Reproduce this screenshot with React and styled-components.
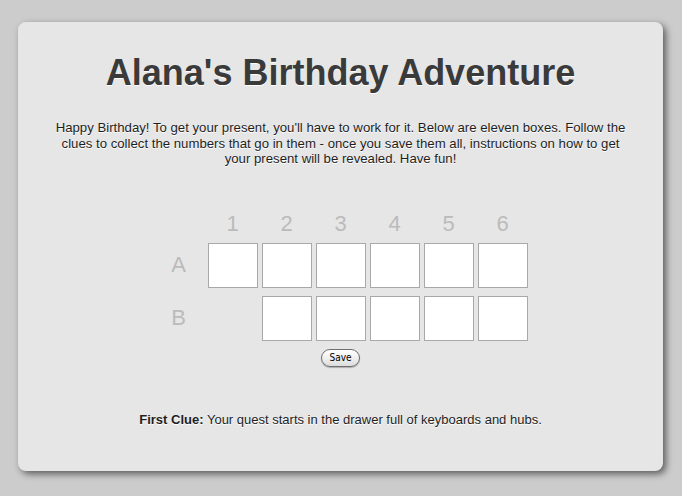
import React from "react"
import styled, { createGlobalStyle } from "styled-components"

const GlobalStyle = createGlobalStyle`
    html, body {
        margin: 0;
        padding: 0;
        background: #cccccc;
    }
    body {
        font-family: "Liberation Sans", Arial, sans-serif;
    }
`

const Page = styled.div`
    padding: 22px 0 0 18px;
    height: 496px;
    box-sizing: border-box;
`

const Card = styled.div`
    width: 645px;
    height: 449px;
    box-sizing: border-box;
    background: #e6e6e6;
    border-radius: 8px;
    box-shadow: 3px 3px 7px rgba(0, 0, 0, 0.55);
    display: flex;
    flex-direction: column;
    align-items: center;
    padding-top: 30px;
`

const Title = styled.h1`
    margin: 0;
    font-size: 36px;
    font-weight: bold;
    color: #3a3a3a;
    text-shadow: 0 1px 0 #ffffff;
    line-height: 42px;
`

const Intro = styled.p`
    margin: 26px 0 0 0;
    width: 576px;
    font-size: 13.2px;
    line-height: 15.5px;
    color: #1e1e1e;
    text-align: center;
    text-shadow: 0 1px 0 #ffffff;
`

const Grid = styled.div`
    display: grid;
    grid-template-columns: repeat(7, 50px);
    column-gap: 4px;
    row-gap: 8px;
    margin-top: 41px;
`

const Header = styled.div`
    height: 28px;
    display: flex;
    align-items: flex-end;
    justify-content: center;
    font-size: 22px;
    color: #bbbbbb;
    margin-bottom: -1px;
    line-height: 24px;
`

const Label = styled.div`
    display: flex;
    align-items: center;
    justify-content: center;
    font-size: 22px;
    color: #bbbbbb;
`

const Box = styled.input`
    width: 50px;
    height: 45px;
    box-sizing: border-box;
    border: 1px solid #a8a8a8;
    background: #ffffff;
    margin: 0;
    padding: 0;
    outline: none;
`

const Spacer = styled.div``

const SaveButton = styled.button`
    margin-top: 8px;
    height: 18px;
    padding: 0 7px;
    font-family: "DejaVu Sans Condensed", "Liberation Sans", sans-serif;
    font-size: 10px;
    line-height: 14px;
    color: #000;
    border: 1px solid #6e6e6e;
    border-radius: 9px;
    background: linear-gradient(#ffffff, #f0f0f0 50%, #dcdcdc);
    box-shadow: 0 1px 1px rgba(0, 0, 0, 0.25);
`

const Clue = styled.p`
    margin: 45px 0 0 0;
    font-size: 13px;
    color: #1e1e1e;
    text-shadow: 0 1px 0 #ffffff;

    b {
        font-weight: bold;
    }
`

const columns = [1, 2, 3, 4, 5, 6]

const App = () => {
    return (
        <Page>
            <GlobalStyle />
            <Card>
                <Title>Alana's Birthday Adventure</Title>
                <Intro>
                    Happy Birthday! To get your present, you'll have to work for it. Below are eleven boxes. Follow the clues to collect the numbers that go in them - once you save them all, instructions on how to get your present will be revealed. Have fun!
                </Intro>
                <Grid>
                    <Spacer />
                    {columns.map(n => <Header key={n}>{n}</Header>)}
                    <Label>A</Label>
                    {columns.map(n => <Box key={'a' + n} />)}
                    <Label>B</Label>
                    <Spacer />
                    {columns.slice(1).map(n => <Box key={'b' + n} />)}
                </Grid>
                <SaveButton>Save</SaveButton>
                <Clue><b>First Clue:</b> Your quest starts in the drawer full of keyboards and hubs.</Clue>
            </Card>
        </Page>
    )
}

export default App
